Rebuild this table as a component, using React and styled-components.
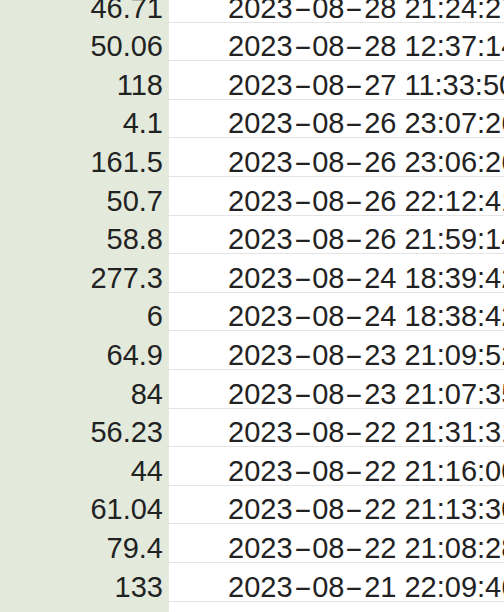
import React from "react"
import styled, { createGlobalStyle } from "styled-components"

const GlobalStyle = createGlobalStyle`
  html, body {
    margin: 0;
    padding: 0;
    background: #ffffff;
    overflow: hidden;
  }
  body {
    font-family: "Liberation Sans", Arial, sans-serif;
  }
`

const Sheet = styled.div`
  display: grid;
  grid-template-columns: 169px 1fr;
  grid-auto-rows: 38.6px;
  margin-top: -16px;
  width: 504px;
  height: 640px;
  overflow: hidden;
  font-size: 29px;
  line-height: 28px;
  color: #222222;
`

const ValueCell = styled.div`
  display: flex;
  align-items: flex-end;
  justify-content: flex-end;
  padding: 0 6px 1px 0;
  background: #e3eadb;
`

const DateCell = styled.div`
  display: flex;
  align-items: flex-end;
  padding: 0 0 0 59px;
  background: #ffffff;
  border-bottom: 1px solid #e4e4e4;
  white-space: nowrap;
  overflow: hidden;
`

const Dash = styled.span`
  display: inline-block;
  margin: 0 5px;
  transform: scaleX(1.9);
`

const rows = [
  ["46.71", "2023-08-28 21:24:27"],
  ["50.06", "2023-08-28 12:37:14"],
  ["118", "2023-08-27 11:33:50"],
  ["4.1", "2023-08-26 23:07:26"],
  ["161.5", "2023-08-26 23:06:26"],
  ["50.7", "2023-08-26 22:12:41"],
  ["58.8", "2023-08-26 21:59:14"],
  ["277.3", "2023-08-24 18:39:42"],
  ["6", "2023-08-24 18:38:42"],
  ["64.9", "2023-08-23 21:09:52"],
  ["84", "2023-08-23 21:07:35"],
  ["56.23", "2023-08-22 21:31:31"],
  ["44", "2023-08-22 21:16:00"],
  ["61.04", "2023-08-22 21:13:30"],
  ["79.4", "2023-08-22 21:08:28"],
  ["133", "2023-08-21 22:09:46"],
  ["", ""],
]

// spreadsheet renders hyphens wide, so stretch them a bit
function DateText({ value }) {
  const [date, time] = value.split(" ")
  if (!date) return null
  const parts = date.split("-")
  return (
    <span>
      {parts.map((p, i) => (
        <React.Fragment key={i}>
          {i > 0 && <Dash>-</Dash>}
          {p}
        </React.Fragment>
      ))}
      {" " + time}
    </span>
  )
}

export default function App() {
  return (
    <>
      <GlobalStyle />
      <Sheet>
        {rows.map(([amount, time], i) => (
          <React.Fragment key={i}>
            <ValueCell>{amount}</ValueCell>
            <DateCell>
              <DateText value={time} />
            </DateCell>
          </React.Fragment>
        ))}
      </Sheet>
    </>
  )
}
